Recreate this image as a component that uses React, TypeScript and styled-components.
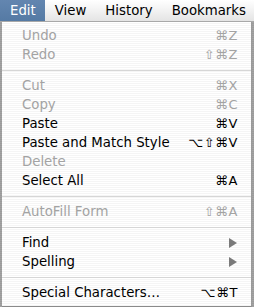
import styled, { createGlobalStyle } from 'styled-components';

const GlobalStyle = createGlobalStyle`
  html, body {
    margin: 0;
    padding: 0;
    background: #9c9c9c;
    font-family: 'DejaVu Sans', 'Liberation Sans', sans-serif;
  }
`;

const Screen = styled.div`
  width: 254px;
  height: 307px;
  overflow: hidden;
  background: repeating-linear-gradient(#a3a3a3 0 1px, #9a9a9a 1px 2px);
`;

const MenuBar = styled.div`
  display: flex;
  height: 21px;
  background: linear-gradient(#ffffff, #f2f2f2 50%, #e4e4e4);
  border-bottom: 1px solid #a8a8a8;
`;

const BarItem = styled.div<{ active?: boolean }>`
  display: flex;
  align-items: center;
  padding: 0 9px 0 10px;
  font-size: 13.3px;
  color: ${({ active }) => (active ? '#ffffff' : '#000000')};
  background: ${({ active }) => (active ? 'linear-gradient(#6386b0, #557aa4)' : 'transparent')};
  white-space: nowrap;
`;

const Menu = styled.div`
  margin-left: 2px;
  width: 249px;
  padding: 4px 0 4px;
  background: repeating-linear-gradient(#ffffff 0 1px, #f5f5f5 1px 2px);
  border-right: 1px solid #9a9a9a;
  border-bottom: 1px solid #8a8a8a;
`;

const Item = styled.div<{ disabled?: boolean }>`
  display: flex;
  align-items: center;
  justify-content: space-between;
  height: 19px;
  padding: 0 13px 0 20px;
  font-size: 13.3px;
  color: ${({ disabled }) => (disabled ? '#a3a3a3' : '#000000')};
  white-space: nowrap;
`;

const Shortcut = styled.span`
  font-size: 13px;
  letter-spacing: 0.5px;
`;

const Arrow = styled.span`
  width: 0;
  height: 0;
  margin-right: 1px;
  border-top: 5px solid transparent;
  border-bottom: 5px solid transparent;
  border-left: 8px solid #7a7a7a;
`;

const Separator = styled.div`
  height: 12px;
  display: flex;
  align-items: center;
  &::after {
    content: '';
    flex: 1;
    height: 1px;
    background: #d6d6d6;
  }
`;

type Entry =
  | { sep: true }
  | { label: string; key?: string; disabled?: boolean; submenu?: boolean };

const entries: Entry[] = [
  { label: 'Undo', key: '⌘Z', disabled: true },
  { label: 'Redo', key: '⇧⌘Z', disabled: true },
  { sep: true },
  { label: 'Cut', key: '⌘X', disabled: true },
  { label: 'Copy', key: '⌘C', disabled: true },
  { label: 'Paste', key: '⌘V' },
  { label: 'Paste and Match Style', key: '⌥⇧⌘V' },
  { label: 'Delete', disabled: true },
  { label: 'Select All', key: '⌘A' },
  { sep: true },
  { label: 'AutoFill Form', key: '⇧⌘A', disabled: true },
  { sep: true },
  { label: 'Find', submenu: true },
  { label: 'Spelling', submenu: true },
  { sep: true },
  { label: 'Special Characters…', key: '⌥⌘T' },
];

export default function App() {
  return (
    <>
      <GlobalStyle />
      <Screen>
        <MenuBar>
          <BarItem active>Edit</BarItem>
          <BarItem>View</BarItem>
          <BarItem>History</BarItem>
          <BarItem>Bookmarks</BarItem>
        </MenuBar>
        <Menu>
          {entries.map((e, i) =>
            'sep' in e ? (
              <Separator key={i} />
            ) : (
              <Item key={i} disabled={e.disabled}>
                <span>{e.label}</span>
                {e.key && <Shortcut>{e.key}</Shortcut>}
                {e.submenu && <Arrow />}
              </Item>
            )
          )}
        </Menu>
      </Screen>
    </>
  );
}
